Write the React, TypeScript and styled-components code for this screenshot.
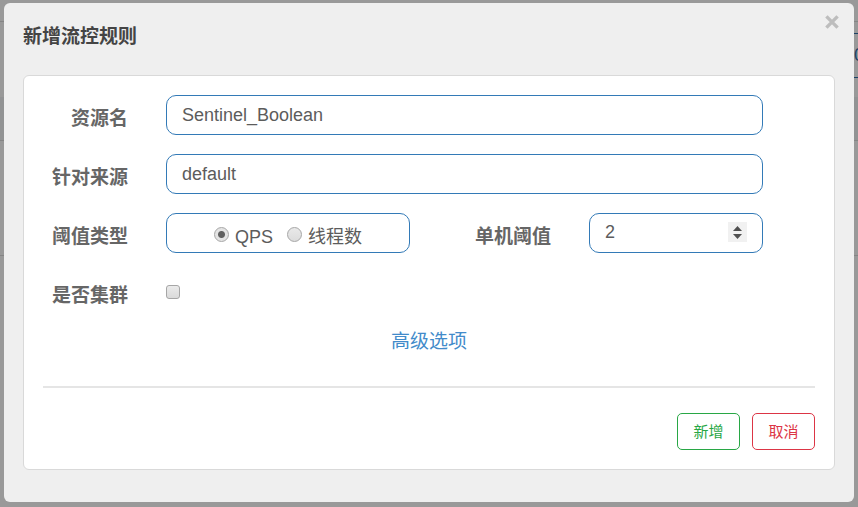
import React, { useState } from 'react';
import styled, { createGlobalStyle } from 'styled-components';

const GlobalStyle = createGlobalStyle`
  *, *::before, *::after { box-sizing: border-box; }
  html, body { margin: 0; background: #999; }
  body, input, button {
    font-family: "Liberation Sans", "Noto Sans CJK SC", sans-serif;
    font-size: 18px;
    color: #5c5c5c;
  }
`;

const Page = styled.div`
  position: relative;
  min-height: 100vh;
  overflow: hidden;
`;

const Underlay = styled.div`
  position: absolute;
  inset: 0;
`;

const UnderlayRow = styled.div<{ $height: number; $shade?: string }>`
  height: ${(p) => p.$height}px;
  border-bottom: 1px solid #858585;
  background: ${(p) => p.$shade ?? '#999'};
`;

const UnderlayToolbar = styled.div`
  display: flex;
  justify-content: flex-end;
  height: 75px;
  padding-top: 11px;
`;

const UnderlayField = styled.div`
  width: 20px;
  height: 45px;
  padding-left: 16px;
  border: solid #1d4165;
  border-width: 1px 0;
  line-height: 43px;
  color: #1d4165;
  overflow: hidden;
`;

const Dialog = styled.section`
  position: relative;
  margin: 3px 4px 5px;
  padding: 0 19px 32px;
  background: #efefef;
  border-radius: 6px;
`;

const Header = styled.header`
  display: flex;
  justify-content: space-between;
  height: 72px;
`;

const Title = styled.h1`
  margin: 20px 0 0;
  font-size: 19px;
  line-height: 28px;
  color: #444;
`;

const CloseButton = styled.button`
  display: flex;
  width: 18px;
  height: 18px;
  margin: 10px -6px 0 0;
  padding: 0;
  border: 0;
  background: none;
`;

const Card = styled.form`
  padding: 19px;
  background: #fff;
  border: 1px solid #d9d9d9;
  border-radius: 6px;
`;

const Fields = styled.div`
  display: flex;
  flex-direction: column;
  gap: 19px;
  padding-right: 52px;
`;

const Row = styled.div`
  display: grid;
  grid-template-columns: 85px minmax(0, 1fr);
  column-gap: 38px;
  align-items: center;
  height: 40px;
`;

const SplitRow = styled.div`
  display: grid;
  grid-template-columns: minmax(0, 244fr) 103px minmax(0, 174fr);
  column-gap: 38px;
  align-items: center;
`;

const Label = styled.label`
  padding-top: 7px;
  font-size: 19px;
  font-weight: bold;
  line-height: 28px;
  text-align: right;
  white-space: nowrap;
  color: #666;
`;

const TextInput = styled.input`
  width: 100%;
  height: 40px;
  padding: 0 15px;
  border: 1px solid #337ab7;
  border-radius: 10px;
  background: #fff;
`;

const RadioBox = styled.div`
  display: flex;
  justify-content: center;
  gap: 14px;
  height: 40px;
  padding-top: 7px;
  border: 1px solid #337ab7;
  border-radius: 10px;
`;

const RadioLabel = styled.label`
  display: flex;
  gap: 6px;
  line-height: 32px;
  white-space: nowrap;
`;

const Radio = styled.input`
  appearance: none;
  width: 15px;
  height: 15px;
  margin: 6px 0 0;
  border: 1px solid #a6a6a6;
  border-radius: 50%;
  background: linear-gradient(#e9e9e9, #dcdcdc);

  &:checked {
    background: radial-gradient(circle, #616161 3px, #e4e4e4 4px);
  }
`;

const NumberBox = styled.div`
  display: flex;
  height: 40px;
  padding: 8px 15px;
  border: 1px solid #337ab7;
  border-radius: 10px;
`;

const NumberInput = styled.input`
  flex: 1;
  min-width: 0;
  height: 20px;
  padding: 0;
  border: 0;
  outline: 0;
  appearance: textfield;

  &::-webkit-inner-spin-button { display: none; }
`;

const Spinner = styled.div`
  display: flex;
  flex-direction: column;
  width: 19px;
  height: 20px;
  background: #f1f1f1;
`;

const SpinButton = styled.button`
  display: flex;
  justify-content: center;
  height: 10px;
  padding: 0;
  border: 0;
  background: none;
`;

const Checkbox = styled.input`
  appearance: none;
  width: 14px;
  height: 14px;
  margin: 0;
  border: 1px solid #a6a6a6;
  border-radius: 3px;
  background: linear-gradient(#ebebeb, #dadada);

  &:checked { background: #616161; }
`;

const Advanced = styled.div`
  display: flex;
  justify-content: center;
  padding: 16px 0 30px;
  border-bottom: 2px solid #e5e5e5;
`;

const AdvancedLink = styled.a`
  font-size: 19px;
  line-height: 28px;
  color: #428bca;
  text-decoration: none;
`;

const Actions = styled.footer`
  display: flex;
  justify-content: flex-end;
  gap: 12px;
  padding-top: 25px;
`;

const ActionButton = styled.button<{ $color: string }>`
  min-width: 63px;
  height: 37px;
  padding: 0 15px;
  border: 1px solid ${(p) => p.$color};
  border-radius: 5px;
  background: #fff;
  font-size: 15px;
  line-height: 34px;
  color: ${(p) => p.$color};
`;

export default function App() {
  const [threshold, setThreshold] = useState(2);

  return (
    <Page>
      <GlobalStyle />
      <Underlay aria-hidden="true">
        <UnderlayRow $height={22} />
        <UnderlayToolbar>
          <UnderlayField>0</UnderlayField>
        </UnderlayToolbar>
        <UnderlayRow $height={44} $shade="#929394" />
        <UnderlayRow $height={115} />
      </Underlay>

      <Dialog role="dialog" aria-labelledby="dialog-title">
        <Header>
          <Title id="dialog-title">新增流控规则</Title>
          <CloseButton type="button" aria-label="关闭">
            <svg width="18" height="18" viewBox="0 0 18 18" aria-hidden="true">
              <path d="M3.4 3.4 14.6 14.6M14.6 3.4 3.4 14.6" stroke="#bdbdbd" strokeWidth="3.4" />
            </svg>
          </CloseButton>
        </Header>

        <Card onSubmit={(e) => e.preventDefault()}>
          <Fields>
            <Row>
              <Label htmlFor="resource">资源名</Label>
              <TextInput id="resource" type="text" defaultValue="Sentinel_Boolean" />
            </Row>
            <Row>
              <Label htmlFor="origin">针对来源</Label>
              <TextInput id="origin" type="text" defaultValue="default" />
            </Row>
            <Row>
              <Label as="span" id="grade-label">阈值类型</Label>
              <SplitRow>
                <RadioBox role="radiogroup" aria-labelledby="grade-label">
                  <RadioLabel>
                    <Radio type="radio" name="grade" defaultChecked />
                    <span>QPS</span>
                  </RadioLabel>
                  <RadioLabel>
                    <Radio type="radio" name="grade" />
                    <span>线程数</span>
                  </RadioLabel>
                </RadioBox>
                <Label htmlFor="threshold">单机阈值</Label>
                <NumberBox>
                  <NumberInput
                    id="threshold"
                    type="number"
                    value={threshold}
                    onChange={(e) => setThreshold(Number(e.target.value))}
                  />
                  <Spinner>
                    <SpinButton type="button" aria-label="增加" onClick={() => setThreshold(threshold + 1)}>
                      <svg width="19" height="10" viewBox="0 0 19 10" aria-hidden="true">
                        <path d="M5 9 9.5 4 14 9Z" fill="#505050" />
                      </svg>
                    </SpinButton>
                    <SpinButton type="button" aria-label="减少" onClick={() => setThreshold(threshold - 1)}>
                      <svg width="19" height="10" viewBox="0 0 19 10" aria-hidden="true">
                        <path d="M5 2 9.5 7 14 2Z" fill="#505050" />
                      </svg>
                    </SpinButton>
                  </Spinner>
                </NumberBox>
              </SplitRow>
            </Row>
            <Row>
              <Label htmlFor="cluster">是否集群</Label>
              <Checkbox id="cluster" type="checkbox" />
            </Row>
          </Fields>

          <Advanced>
            <AdvancedLink href="#advanced">高级选项</AdvancedLink>
          </Advanced>

          <Actions>
            <ActionButton type="submit" $color="#28a745">新增</ActionButton>
            <ActionButton type="button" $color="#dc3545">取消</ActionButton>
          </Actions>
        </Card>
      </Dialog>
    </Page>
  );
}
